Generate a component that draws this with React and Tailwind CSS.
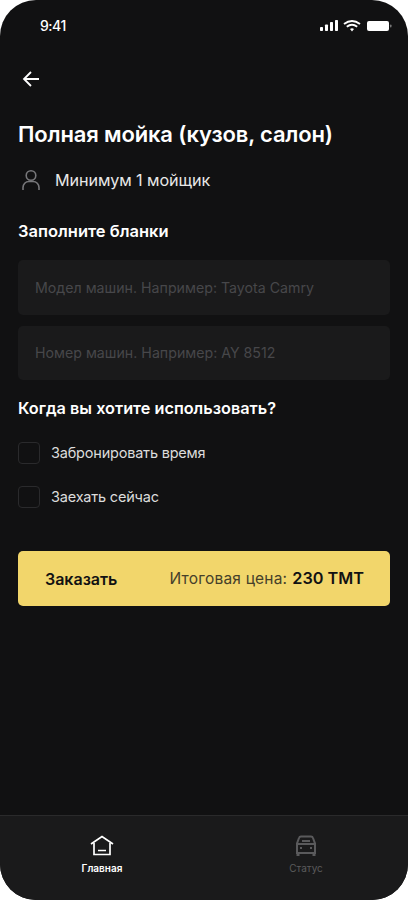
export default function App() {
  return (
    <div className="w-[408px] h-[900px] bg-white overflow-hidden" style={{ fontFamily: '"Inter", "Noto Sans", sans-serif' }}>
      <div className="w-full h-full bg-[#111112] rounded-[36px] overflow-hidden flex flex-col text-white">
        <div className="h-[52px] shrink-0 pl-[40px] pr-[16px] pt-[17px] flex justify-between items-start">
          <span className="text-[14px] leading-[18px] font-medium tracking-[-0.5px]">9:41</span>
          <svg width="72" height="18" viewBox="0 0 72 18" fill="white">
            <rect x="0" y="10" width="3" height="4" rx="0.8" />
            <rect x="5" y="7.5" width="3" height="6.5" rx="0.8" />
            <rect x="10" y="5" width="3" height="9" rx="0.8" />
            <rect x="15" y="3" width="3" height="11" rx="0.8" />
            <path d="M24 7 Q32 1 40 7 M26.8 9.8 Q32 5.6 37.2 9.8" stroke="white" strokeWidth="1.9" fill="none" />
            <path d="M30 12 Q32 10.4 34 12 L32 14.4 Z" />
            <rect x="47" y="4" width="22" height="10" rx="2" />
            <rect x="70" y="7.5" width="1.5" height="3" rx="0.7" fill="#777" />
          </svg>
        </div>

        <div className="flex-1 px-[18px] flex flex-col">
          <svg width="20" height="20" viewBox="0 0 20 20" fill="none" stroke="white" strokeWidth="1.8" className="mt-[17px] ml-[3px]">
            <path d="M18 10H3M10 3l-7 7 7 7" />
          </svg>
          <h1 className="mt-[30px] text-[22px] leading-[30px] font-semibold tracking-[-0.15px] whitespace-nowrap">Полная мойка (кузов, салон)</h1>
          <div className="mt-[16px] flex items-center h-[30px]">
            <svg width="20" height="22" viewBox="0 0 20 22" fill="none" stroke="#77777a" strokeWidth="1.6" className="ml-[3px]">
              <circle cx="10" cy="6.5" r="4.8" />
              <path d="M2 21v-2.5c0-3.4 2.6-6 6-6h4c3.4 0 6 2.6 6 6V21" />
            </svg>
            <span className="ml-[14px] text-[16.2px] leading-[20px] text-[#e8e8e8] tracking-[-0.1px] whitespace-nowrap">Минимум 1 мойщик</span>
          </div>
          <h2 className="mt-[25px] text-[16.5px] leading-[22px] font-semibold whitespace-nowrap">Заполните бланки</h2>
          <div className="mt-[18px] h-[55px] rounded-[5px] bg-[#1a1a1b] flex items-center pl-[17px] text-[14.2px] text-[#47474a] whitespace-nowrap">Модел машин. Например: Tayota Camry</div>
          <div className="mt-[11px] h-[54px] rounded-[5px] bg-[#1a1a1b] flex items-center pl-[17px] text-[14.2px] text-[#47474a] whitespace-nowrap">Номер машин. Например: AY 8512</div>
          <h2 className="mt-[16px] text-[16.25px] leading-[24px] font-semibold whitespace-nowrap">Когда вы хотите использовать?</h2>
          <div className="mt-[22px] flex items-center h-[22px]">
            <div className="w-[22px] h-[22px] rounded-[4px] border border-[#2a2a2c]" />
            <span className="ml-[11px] text-[14.5px] text-[#dcdcdc] tracking-[-0.2px] whitespace-nowrap">Забронировать время</span>
          </div>
          <div className="mt-[22px] flex items-center h-[22px]">
            <div className="w-[22px] h-[22px] rounded-[4px] border border-[#2a2a2c]" />
            <span className="ml-[11px] text-[14.5px] text-[#dcdcdc] tracking-[-0.2px] whitespace-nowrap">Заехать сейчас</span>
          </div>
          <div className="mt-[43px] h-[55px] rounded-[5px] bg-[#f2d66b] flex items-center justify-between pl-[27px] pr-[26px] text-[#111112]">
            <span className="text-[16px] font-semibold">Заказать</span>
            <span className="flex items-center gap-[5px] whitespace-nowrap">
              <span className="text-[15.5px] tracking-[0.2px] text-[#45402a]">Итоговая цена:</span>
              <span className="text-[16.25px] font-semibold">230 ТМТ</span>
            </span>
          </div>
        </div>

        <div className="h-[85px] shrink-0 bg-[#1a1a1b] border-t border-[#2a2a2b] grid grid-cols-2">
          <div className="flex flex-col items-center pt-[19px]">
            <svg width="24" height="22" viewBox="0 0 24 22" fill="none" stroke="white" strokeWidth="1.7">
              <path d="M1 9 12 1.5 23 9" />
              <path d="M4 8v11.5h16V8" />
              <path d="M8 15.5h8" />
            </svg>
            <span className="mt-[4px] text-[10px] leading-[14px] font-semibold">Главная</span>
          </div>
          <div className="flex flex-col items-center pt-[19px]">
            <svg width="24" height="22" viewBox="0 0 24 22" fill="none" stroke="#5a5a5c" strokeWidth="2">
              <path d="M3 18V8.5L5 3c.3-1 1-1.5 2-1.5h10c1 0 1.7.5 2 1.5l2 5.5V18Z" />
              <path d="M4 9h16" />
              <path d="M8 6h8" />
              <path d="M4 18v3M20 18v3" strokeWidth="3" />
              <path d="M6 13h2M16 13h2" />
            </svg>
            <span className="mt-[4px] text-[10px] leading-[14px] text-[#5a5a5c]">Статус</span>
          </div>
        </div>
      </div>
    </div>
  );
}
